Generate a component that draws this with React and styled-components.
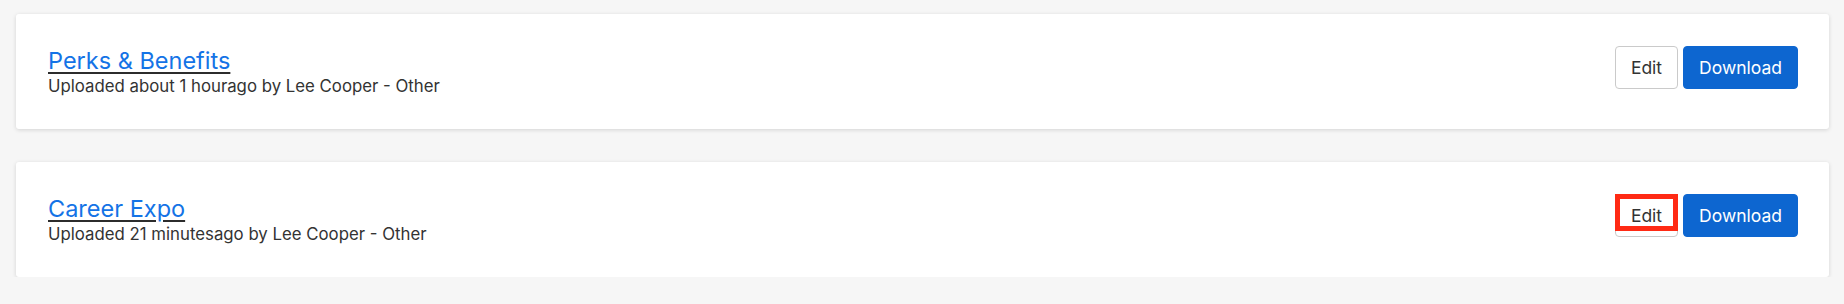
import React from 'react';
import styled, { createGlobalStyle } from 'styled-components';

const GlobalStyle = createGlobalStyle`
  body {
    margin: 0;
    background: #f6f6f6;
    font-family: Inter, "Noto Sans", sans-serif;
    color: #333;
  }
`;

const List = styled.div`
  display: flex;
  flex-direction: column;
  gap: 33px;
  padding: 14px 15px 0 16px;
`;

const Card = styled.div`
  display: flex;
  align-items: center;
  justify-content: space-between;
  height: 115px;
  box-sizing: border-box;
  padding: 0 31px 0 32px;
  background: #fff;
  border-radius: 3px;
  box-shadow: 0 1px 4px rgba(0, 0, 0, 0.14);
`;

const Info = styled.div`
  display: flex;
  flex-direction: column;
`;

const Title = styled.a`
  font-size: 23.5px;
  line-height: 29px;
  color: #1473e6;
  text-decoration: underline;
  text-decoration-color: #2c2c2c;
  text-decoration-thickness: 2px;
  text-underline-offset: 3px;
  cursor: pointer;
`;

const Meta = styled.div`
  font-size: 16.8px;
  line-height: 22px;
  color: #333;
`;

const Actions = styled.div`
  display: flex;
  gap: 5px;
  margin-top: -8px;
`;

const Button = styled.button`
  position: relative;
  height: 43px;
  padding: 0 15px;
  border-radius: 4px;
  font-family: Inter, "Noto Sans", sans-serif;
  font-size: 17.5px;
  cursor: pointer;
  border: 1px solid ${p => (p.$primary ? '#0d66d0' : '#cacaca')};
  background: ${p => (p.$primary ? '#0d66d0' : '#fff')};
  color: ${p => (p.$primary ? '#fff' : '#333')};
`;

const Highlight = styled.span`
  position: absolute;
  left: -1px;
  top: -1px;
  right: -1px;
  bottom: 5px;
  border: 5px solid #ff2a14;
  pointer-events: none;
`;

const files = [
  { title: 'Perks & Benefits', meta: 'Uploaded about 1 hourago by Lee Cooper - Other' },
  { title: 'Career Expo', meta: 'Uploaded 21 minutesago by Lee Cooper - Other', marked: true },
];

export default function App() {
  return (
    <>
      <GlobalStyle />
      <List>
        {files.map(f => (
          <Card key={f.title}>
            <Info>
              <Title>{f.title}</Title>
              <Meta>{f.meta}</Meta>
            </Info>
            <Actions>
              <Button>
                Edit
                {f.marked && <Highlight />}
              </Button>
              <Button $primary>Download</Button>
            </Actions>
          </Card>
        ))}
      </List>
    </>
  );
}
